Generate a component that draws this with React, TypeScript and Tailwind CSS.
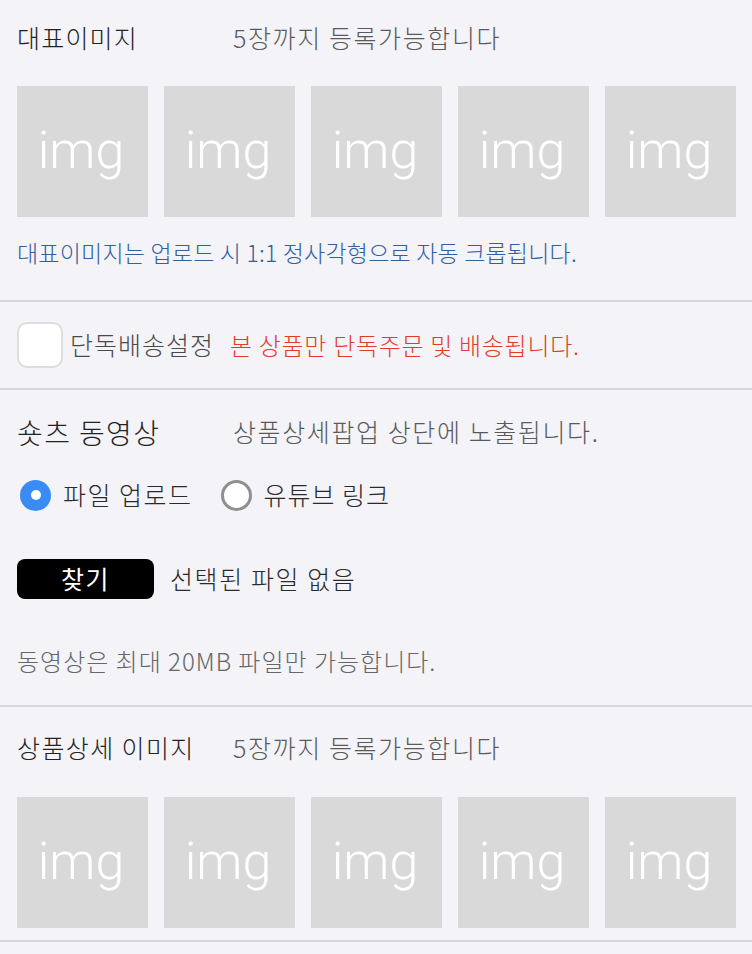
const font = { fontFamily: '"Noto Sans CJK KR", "Noto Sans", sans-serif' }

function ImgBox() {
  return (
    <div className="h-[131px] bg-[#d9d9d9] flex items-center justify-center">
      <span className="text-[52px] text-white font-light leading-none pb-[2px] pr-[3px] blur-[0.4px]" style={{ fontFamily: 'Roboto, sans-serif' }}>
        img
      </span>
    </div>
  )
}

function ImgRow() {
  return (
    <div className="grid grid-cols-5 gap-[16px]">
      {[0, 1, 2, 3, 4].map((i) => (
        <ImgBox key={i} />
      ))}
    </div>
  )
}

function Divider() {
  return <div className="h-[2px] bg-[#d8d7dc]" />
}

export default function App() {
  return (
    <div className="min-h-screen w-[752px] bg-[#f4f3f8] text-[#2a2a2a] font-light" style={font}>
      {/* 대표이미지 */}
      <section className="pl-[17px] pr-[16px] pt-[22px] pb-[33px]">
        <div className="flex items-center h-[32px] text-[25px] tracking-[1.2px]">
          <span className="w-[216px] text-[#222]">대표이미지</span>
          <span className="text-[#5a5a5a] tracking-[1.6px]">5장까지 등록가능합니다</span>
        </div>
        <div className="mt-[32px]">
          <ImgRow />
        </div>
        <p className="mt-[20px] leading-[30px] text-[23px] tracking-[0.2px] text-[#30609e]">
          대표이미지는 업로드 시 1:1 정사각형으로 자동 크롭됩니다.
        </p>
      </section>

      <Divider />

      {/* 단독배송 */}
      <section className="pl-[17px] py-[20px] flex items-center">
        <div className="w-[46px] h-[46px] bg-white border-2 border-[#dddddd] rounded-[10px]" />
        <span className="ml-[7px] text-[25px] tracking-[1px] text-[#4a4a4a]">단독배송설정</span>
        <span className="ml-[16px] text-[24px] tracking-[0.7px] text-[#e03c2a]">본 상품만 단독주문 및 배송됩니다.</span>
      </section>

      <Divider />

      {/* 숏츠 동영상 */}
      <section className="pl-[17px] pt-[26px] pb-[29px]">
        <div className="flex items-center h-[32px]">
          <span className="w-[216px] text-[28px] tracking-[1.4px] text-[#222]">숏츠 동영상</span>
          <span className="text-[25px] tracking-[1.6px] text-[#5a5a5a]">상품상세팝업 상단에 노출됩니다.</span>
        </div>
        <div className="mt-[31px] flex items-center h-[32px] text-[25px] text-[#2a2a2a]">
          <div className="ml-[3px] w-[31px] h-[31px] rounded-full bg-[#3a8cf4] flex items-center justify-center">
            <div className="w-[10px] h-[10px] rounded-full bg-white" />
          </div>
          <span className="ml-[12px] tracking-[1.5px]">파일 업로드</span>
          <div className="ml-[28px] w-[31px] h-[31px] rounded-full bg-white border-[3px] border-[#8f8f8f]" />
          <span className="ml-[12px] tracking-[1px]">유튜브 링크</span>
        </div>
        <div className="mt-[48px] flex items-center">
          <div className="w-[137px] h-[40px] rounded-[8px] bg-black text-white text-[25px] font-normal tracking-[1.5px] flex items-center justify-center">
            찾기
          </div>
          <span className="ml-[16px] text-[25px] tracking-[1.6px] text-[#2a2a2a]">선택된 파일 없음</span>
        </div>
        <p className="mt-[47px] leading-[30px] text-[24px] tracking-[1px] text-[#666]">동영상은 최대 20MB 파일만 가능합니다.</p>
      </section>

      <Divider />

      {/* 상품상세 이미지 */}
      <section className="pl-[17px] pr-[16px] pt-[25px] pb-[12px]">
        <div className="flex items-center h-[32px] text-[25px]">
          <span className="w-[216px] tracking-[1.4px] text-[#222]">상품상세 이미지</span>
          <span className="tracking-[1.6px] text-[#5a5a5a]">5장까지 등록가능합니다</span>
        </div>
        <div className="mt-[33px]">
          <ImgRow />
        </div>
      </section>

      <Divider />
    </div>
  )
}
